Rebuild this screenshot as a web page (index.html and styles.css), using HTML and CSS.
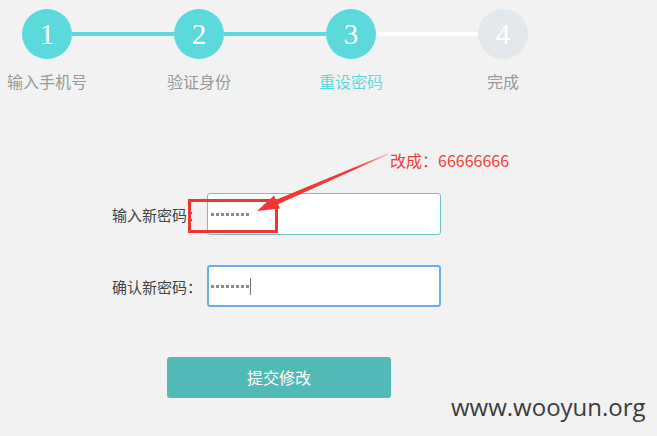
FILE: index.html
```html
<!DOCTYPE html>
<html lang="zh-CN">
<head>
<meta charset="utf-8">
<title>重设密码</title>
<link rel="stylesheet" href="styles.css">
</head>
<body>
<div class="page">
  <div class="steps">
    <div class="step done"><div class="circle">1</div><div class="label">输入手机号</div></div>
    <div class="line done"></div>
    <div class="step done"><div class="circle">2</div><div class="label">验证身份</div></div>
    <div class="line done"></div>
    <div class="step current"><div class="circle">3</div><div class="label">重设密码</div></div>
    <div class="line todo"></div>
    <div class="step todo"><div class="circle">4</div><div class="label">完成</div></div>
  </div>

  <div class="form">
    <div class="row">
      <div class="field-label">输入新密码：</div>
      <div class="field"><span class="dots"></span></div>
    </div>
    <div class="row">
      <div class="field-label">确认新密码：</div>
      <div class="field focus"><span class="dots"></span><span class="caret"></span></div>
    </div>
    <div class="submit">提交修改</div>
  </div>
</div>

<div class="annotation">
  <svg class="overlay" width="657" height="436" viewBox="0 0 657 436">
    <defs>
      <linearGradient id="fade" x1="388" y1="154" x2="257" y2="211" gradientUnits="userSpaceOnUse">
        <stop offset="0" stop-color="#f7b5b5"/>
        <stop offset="0.25" stop-color="#f03a3a"/>
        <stop offset="1" stop-color="#f03434"/>
      </linearGradient>
    </defs>
    <rect x="189.5" y="200.5" width="87" height="31" fill="none" stroke="#f03434" stroke-width="3"/>
    <polygon points="257,211 280,208.6 278,204.3 388.2,154.6 387.8,153.4 276,199.7 274,195.6" fill="url(#fade)"/>
  </svg>
  <div class="note">改成：66666666</div>
</div>

<div class="watermark">www.wooyun.org</div>
</body>
</html>
```

FILE: styles.css
```css
html, body {
  margin: 0;
  padding: 0;
}
body {
  width: 657px;
  height: 436px;
  overflow: hidden;
  background: #f2f2f2;
  font-family: "Noto Sans CJK SC", "Liberation Sans", sans-serif;
  position: relative;
}

.steps {
  display: flex;
  align-items: flex-start;
  padding: 9px 0 0 22px;
}
.step {
  width: 50px;
  display: flex;
  flex-direction: column;
  align-items: center;
}
.circle {
  width: 50px;
  height: 50px;
  border-radius: 50%;
  background: #5bd9dd;
  color: #fff;
  font-family: "Liberation Serif", "DejaVu Serif", serif;
  font-size: 29px;
  line-height: 50px;
  text-align: center;
}
.step.todo .circle {
  background: #e3e8ec;
}
.label {
  margin-top: 13px;
  font-size: 16px;
  line-height: 18px;
  color: #999;
  white-space: nowrap;
}
.step.current .label {
  color: #5bd9dd;
}
.line {
  width: 102px;
  height: 4px;
  margin-top: 23px;
  background: #5bd9dd;
}
.line.todo {
  background: #fff;
}

.form {
  margin-top: 103px;
  padding-left: 112px;
  display: flex;
  flex-direction: column;
  gap: 30px;
}
.row {
  display: flex;
  align-items: center;
  height: 42px;
}
.field-label {
  width: 95px;
  font-size: 15px;
  color: #444;
  white-space: nowrap;
}
.field {
  box-sizing: border-box;
  width: 234px;
  height: 42px;
  background: #fff;
  border: 1px solid #6cc3c3;
  border-radius: 3px;
  display: flex;
  align-items: center;
  padding-left: 3px;
}
.field.focus {
  border: 2px solid #6eaee8;
  padding-left: 2px;
}
.dots {
  display: inline-block;
  width: 38px;
  height: 3px;
  background: repeating-linear-gradient(90deg, #8c8c8c 0 3px, transparent 3px 5px);
}
.caret {
  display: inline-block;
  width: 1px;
  height: 17px;
  margin-left: 1px;
  background: #777;
}
.submit {
  margin-top: 20px;
  margin-left: 55px;
  width: 224px;
  height: 41px;
  border-radius: 3px;
  background: #53b9b7;
  color: #fff;
  font-size: 16px;
  line-height: 41px;
  text-align: center;
}

.annotation {
  position: absolute;
  inset: 0;
  pointer-events: none;
}
.overlay {
  position: absolute;
  left: 0;
  top: 0;
}
.note {
  position: absolute;
  left: 390px;
  top: 150px;
  font-size: 16px;
  line-height: 20px;
  color: #f03c3c;
  white-space: nowrap;
}

.watermark {
  position: absolute;
  left: 451px;
  top: 392px;
  font-family: "Open Sans", "DejaVu Sans", sans-serif;
  font-size: 24px;
  line-height: 30px;
  color: #3c3c3c;
  letter-spacing: 0;
}
```
